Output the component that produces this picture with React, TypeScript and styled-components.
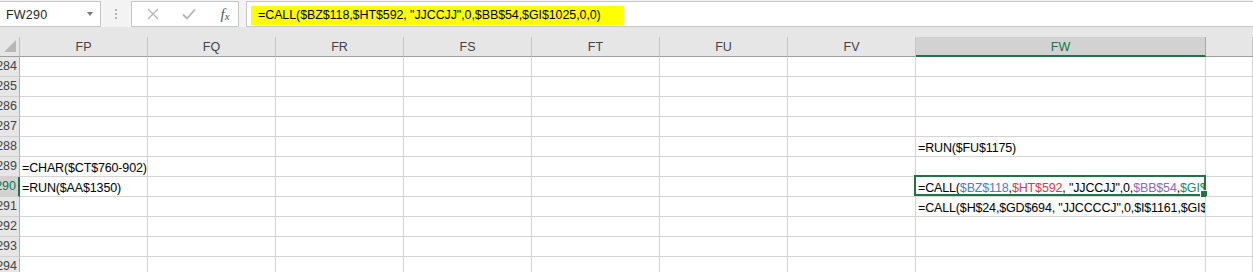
import React from "react";
import styled, { createGlobalStyle, css } from "styled-components";

type Part = { text: string; color?: string };
type CellValue = string | Part[];

const COLUMNS = ["FP", "FQ", "FR", "FS", "FT", "FU", "FV", "FW", "FX"];
const ROWS = [284, 285, 286, 287, 288, 289, 290, 291, 292, 293, 294];
const ACTIVE_COL = "FW";
const ACTIVE_ROW = 290;

const cells: Record<string, CellValue> = {
  FP289: "=CHAR($CT$760-902)",
  FP290: "=RUN($AA$1350)",
  FW288: "=RUN($FU$1175)",
  FW290: [
    { text: "=CALL(" },
    { text: "$BZ$118", color: "#4a7bd4" },
    { text: "," },
    { text: "$HT$592", color: "#d63a4a" },
    { text: ', "JJCCJJ",0,' },
    { text: "$BB$54", color: "#9262c6" },
    { text: "," },
    { text: "$GI$1025", color: "#178a5c" },
    { text: ",0,0)" },
  ],
  FW291: '=CALL($H$24,$GD$694, "JJCCCCJ",0,$I$1161,$GI$1025,0,0)',
};

const renderValue = (value: CellValue) =>
  typeof value === "string"
    ? value
    : value.map((p, i) => (
        <span key={i} style={p.color ? { color: p.color } : undefined}>
          {p.text}
        </span>
      ));

const App: React.FC = () => {
  return (
    <>
      <GlobalStyle />
      <Window>
        <FormulaBar>
          <NameBox>
            <NameText>FW290</NameText>
            <Caret />
          </NameBox>
          <Grip>
            <Dot />
            <Dot />
            <Dot />
          </Grip>
          <ButtonBox>
            <IconSlot>
              <svg width="12" height="12" viewBox="0 0 12 12">
                <path d="M1 1 L11 11 M11 1 L1 11" stroke="#b3b3b3" strokeWidth="1.3" fill="none" />
              </svg>
            </IconSlot>
            <IconSlot>
              <svg width="14" height="12" viewBox="0 0 14 12">
                <path d="M1 6.5 L5 10.5 L13 1.5" stroke="#b3b3b3" strokeWidth="1.8" fill="none" />
              </svg>
            </IconSlot>
            <Fx>
              f<sub>x</sub>
            </Fx>
          </ButtonBox>
          <FormulaInput>
            <Highlight>=CALL($BZ$118,$HT$592, "JJCCJJ",0,$BB$54,$GI$1025,0,0)</Highlight>
          </FormulaInput>
        </FormulaBar>
        <Gap />
        <Sheet>
          <Corner>
            <svg width="14" height="14" viewBox="0 0 14 14">
              <polygon points="1,13 13,13 13,1" fill="#b7b7b7" />
            </svg>
          </Corner>
          {COLUMNS.map((col) => (
            <ColHeader key={col} active={col === ACTIVE_COL}>
              {col === "FX" ? "" : col}
            </ColHeader>
          ))}
          {ROWS.map((row) => (
            <React.Fragment key={row}>
              <RowHeader active={row === ACTIVE_ROW}>
                <span>{row}</span>
              </RowHeader>
              {COLUMNS.map((col) => {
                const value = cells[col + row];
                const selected = col === ACTIVE_COL && row === ACTIVE_ROW;
                return (
                  <Cell key={col}>
                    {value && <CellText>{renderValue(value)}</CellText>}
                    {selected && (
                      <Selection>
                        <FillHandle />
                      </Selection>
                    )}
                  </Cell>
                );
              })}
            </React.Fragment>
          ))}
        </Sheet>
      </Window>
    </>
  );
};

const GlobalStyle = createGlobalStyle`
  html, body {
    margin: 0;
    padding: 0;
    background: #ffffff;
    overflow: hidden;
  }
  body {
    font-family: "Liberation Sans", Arial, sans-serif;
  }
`;

const Window = styled.div`
  width: 1253px;
  height: 272px;
  overflow: hidden;
  display: flex;
  flex-direction: column;
  background: #ffffff;
`;

const FormulaBar = styled.div`
  height: 27px;
  flex: 0 0 auto;
  display: flex;
  align-items: flex-start;
  padding-top: 1px;
  box-sizing: border-box;
  background: #f3f3f3;
`;

const boxLook = css`
  height: 26px;
  box-sizing: border-box;
  border: 1px solid #c6c6c6;
  background: #ffffff;
`;

const NameBox = styled.div`
  ${boxLook};
  width: 102px;
  margin-left: -1px;
  display: flex;
  align-items: center;
  justify-content: space-between;
  padding: 0 7px 0 6px;
`;

const NameText = styled.span`
  font-size: 12.5px;
  color: #262626;
  letter-spacing: 0.2px;
  padding-top: 1px;
`;

const Caret = styled.span`
  width: 0;
  height: 0;
  border-left: 3.5px solid transparent;
  border-right: 3.5px solid transparent;
  border-top: 4px solid #7a7a7a;
  margin-top: -1px;
`;

const Grip = styled.div`
  width: 30px;
  height: 26px;
  display: flex;
  flex-direction: column;
  align-items: center;
  justify-content: center;
  gap: 2px;
`;

const Dot = styled.span`
  width: 2px;
  height: 2px;
  background: #b5b5b5;
`;

const ButtonBox = styled.div`
  ${boxLook};
  width: 108px;
  display: grid;
  grid-template-columns: 38px 34px 1fr;
  align-items: center;
  padding-left: 2px;
`;

const IconSlot = styled.span`
  display: flex;
  align-items: center;
  justify-content: center;
`;

const Fx = styled.span`
  font-family: "Liberation Serif", "Times New Roman", serif;
  font-style: italic;
  font-size: 15px;
  color: #555555;
  text-align: center;
  padding-left: 6px;
  line-height: 1;

  sub {
    font-size: 11px;
    vertical-align: baseline;
    position: relative;
    top: 1px;
  }
`;

const FormulaInput = styled.div`
  ${boxLook};
  flex: 1;
  margin-left: 7px;
  margin-right: -2px;
  padding: 3px 0 0 4px;
`;

const Highlight = styled.span`
  display: inline-block;
  background: #ffff00;
  height: 19px;
  line-height: 19px;
  padding: 0 23px 0 7px;
  font-size: 12.5px;
  letter-spacing: -0.1px;
  color: #000000;
  white-space: nowrap;
`;

const Gap = styled.div`
  height: 10px;
  flex: 0 0 auto;
  background: #e6e6e6;
`;

const Sheet = styled.div`
  display: grid;
  grid-template-columns: 20px repeat(7, 128px) 290px 1fr;
  grid-auto-rows: 20px;
  font-size: 12.5px;
`;

const headerBase = css`
  box-sizing: border-box;
  background: #e6e6e6;
  color: #444444;
  overflow: hidden;
  white-space: nowrap;
`;

const Corner = styled.div`
  ${headerBase};
  border-right: 1px solid #c2c2c2;
  border-bottom: 1px solid #9f9f9f;
  display: flex;
  align-items: flex-end;
  justify-content: flex-end;
  padding: 0 2px 3px 0;
`;

const ColHeader = styled.div<{ active?: boolean }>`
  ${headerBase};
  display: flex;
  align-items: center;
  justify-content: center;
  padding-top: 1px;
  border-right: 1px solid ${({ active }) => (active ? "#a8a8a8" : "#c6c6c6")};
  border-bottom: ${({ active }) => (active ? "2px solid #217346" : "1px solid #9f9f9f")};
  background: ${({ active }) => (active ? "#d2d2d2" : "#e6e6e6")};
  color: ${({ active }) => (active ? "#217346" : "#444444")};
`;

const RowHeader = styled.div<{ active?: boolean }>`
  ${headerBase};
  display: flex;
  align-items: flex-end;
  justify-content: flex-end;
  padding: 0 2px 2px 0;
  border-bottom: 1px solid #d0d0d0;
  border-right: ${({ active }) => (active ? "2px solid #217346" : "1px solid #b0b0b0")};
  background: ${({ active }) => (active ? "#d2d2d2" : "#e6e6e6")};
  color: ${({ active }) => (active ? "#217346" : "#444444")};
  line-height: 15px;
`;

const Cell = styled.div`
  position: relative;
  box-sizing: border-box;
  border-right: 1px solid #d4d4d4;
  border-bottom: 1px solid #d4d4d4;
  display: flex;
  align-items: flex-end;
  padding: 0 0 0 1px;
  min-width: 0;
`;

const CellText = styled.div`
  flex: 1;
  min-width: 0;
  overflow: hidden;
  white-space: nowrap;
  line-height: 15px;
  letter-spacing: -0.15px;
  color: #000000;
  padding-left: 1px;
`;

const Selection = styled.span`
  position: absolute;
  left: -2px;
  top: -2px;
  width: calc(100% + 3px);
  height: calc(100% + 2px);
  box-sizing: border-box;
  border: 2px solid #217346;
  pointer-events: none;
`;

const FillHandle = styled.span`
  position: absolute;
  right: -4px;
  bottom: -4px;
  width: 6px;
  height: 6px;
  background: #217346;
  border: 1px solid #ffffff;
`;

export default App;
